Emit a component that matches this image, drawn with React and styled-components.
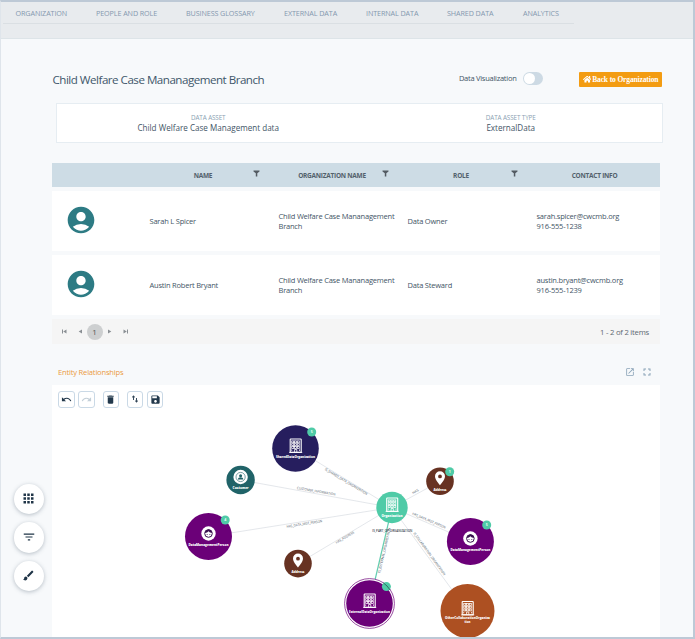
import styled, { createGlobalStyle } from "styled-components";
import {
  MdAccountCircle,
  MdApps,
  MdBrush,
  MdDelete,
  MdFilterList,
  MdFullscreen,
  MdOpenInNew,
  MdRedo,
  MdSave,
  MdUndo,
} from "react-icons/md";
import { FaHome } from "react-icons/fa";

const GlobalStyle = createGlobalStyle`
  * {
    box-sizing: border-box;
  }
  body {
    margin: 0;
    font-family: "Open Sans", "Noto Sans", sans-serif;
    color: #3f5566;
  }
`;

const Page = styled.div`
  height: 639px;
  overflow: hidden;
  background: #f7f9fb;
  border: 2px solid #bdc9d6;
  border-left: 1px solid #dfe5eb;
`;

const Header = styled.header`
  height: 37px;
  background: #e8ebee;
  border-bottom: 1px solid #dde4e8;
`;

const Nav = styled.nav`
  display: flex;
  align-items: center;
  width: 571px;
  height: 22px;
  margin-left: 2px;
  padding-left: 12.5px;
  border-bottom: 1px solid #dadfe3;
`;

const NavItem = styled.a`
  flex: none;
  width: ${(props) => props.$width}px;
  font-size: 7.2px;
  letter-spacing: -0.1px;
  white-space: nowrap;
  color: #8498af;
`;

const Body = styled.div`
  display: flex;
`;

const Gutter = styled.aside`
  display: flex;
  flex-direction: column;
  gap: 8px;
  width: 51px;
  padding: 444.5px 0 0 12.5px;
`;

const RoundButton = styled.button`
  display: flex;
  align-items: center;
  justify-content: center;
  width: 30.5px;
  height: 30.5px;
  padding: 0;
  border: none;
  border-radius: 50%;
  background: #fff;
  color: #1f3447;
  box-shadow: 0 1px 4px rgba(60, 80, 100, 0.35);
`;

const Content = styled.main`
  width: 611px;
`;

const TitleRow = styled.div`
  display: flex;
  align-items: center;
  height: 64px;
  padding-top: 16px;
`;

const Title = styled.h1`
  flex: 1;
  margin: 0 0 0 0.5px;
  font-size: 11.6px;
  font-weight: 400;
  letter-spacing: -0.5px;
  white-space: nowrap;
  color: #40576a;
`;

const ToggleLabel = styled.span`
  margin: -3px 6px 0 0;
  font-size: 7.5px;
  letter-spacing: -0.26px;
`;

const Toggle = styled.span`
  display: flex;
  align-items: center;
  width: 20.5px;
  height: 13.5px;
  margin: -1px 36px 0 0;
  padding: 1px;
  border-radius: 7px;
  background: #cddae4;

  &::before {
    content: "";
    width: 11.5px;
    height: 11.5px;
    border-radius: 50%;
    background: #fff;
  }
`;

const BackButton = styled.button`
  display: flex;
  align-items: center;
  justify-content: center;
  gap: 1px;
  width: 83px;
  height: 15px;
  margin-right: 1px;
  padding: 0;
  border: none;
  border-radius: 1px;
  background: #f39c12;
  color: #fff;
  font: bold 7.5px "Liberation Serif", serif;
  letter-spacing: -0.13px;
  white-space: nowrap;
`;

const AssetCard = styled.section`
  display: grid;
  grid-template-columns: 1fr 1fr;
  align-items: center;
  width: 607px;
  height: 40px;
  margin-left: 4px;
  padding-bottom: 1px;
  background: #fff;
  border: 1px solid #e6edf2;
  text-align: center;
`;

const AssetLabel = styled.div`
  font-size: 6.3px;
  line-height: 11px;
  letter-spacing: -0.1px;
  color: #8b9fb3;
`;

const AssetValue = styled.div`
  font-size: 8.1px;
  line-height: 10px;
`;

const Table = styled.section`
  width: 608px;
  margin-top: 20px;
`;

const HeadRow = styled.div`
  display: grid;
  grid-template-columns: 90px 129px 129px 129px 131px;
  align-items: center;
  height: 24px;
  background: #cddce5;
`;

const HeadCell = styled.div`
  display: flex;
  align-items: center;
  font-size: 6.5px;
  font-weight: 700;
  letter-spacing: -0.25px;
  color: #53616c;

  span {
    flex: 1;
    text-align: center;
  }
  svg {
    margin: -4px 11px 0 -11px;
  }
`;

const Row = styled.div`
  display: grid;
  grid-template-columns: 90px 129px 129px 129px 131px;
  align-items: center;
  height: 60px;
  margin-top: 4px;
  background: #fff;
`;

const Avatar = styled(MdAccountCircle)`
  margin: -3px 0 0 12.5px;
  color: #2d7b84;
`;

const Cell = styled.div`
  padding-left: 7.5px;
  font-size: 7.5px;
  line-height: 10px;
  letter-spacing: -0.21px;
  white-space: pre;
`;

const Pager = styled.div`
  display: flex;
  align-items: center;
  gap: 3px;
  height: 25px;
  margin-top: 4px;
  padding: 0 11px 0 8.5px;
  background: #f5f5f5;
  color: #8a8f94;
`;

const PagerArrows = styled.span`
  display: flex;
  gap: 9px;
`;

const PageNumber = styled.span`
  display: flex;
  align-items: center;
  justify-content: center;
  width: 16px;
  height: 16px;
  border-radius: 50%;
  background: #cdcfd0;
  color: #555;
  font-size: 8px;
`;

const PagerArrow = styled.svg`
  width: 7px;
  height: 7px;
  fill: currentColor;
`;

const PageCount = styled.span`
  margin-left: auto;
  font-size: 7.7px;
  letter-spacing: -0.23px;
  color: #5d6872;
`;

const PanelHead = styled.div`
  display: flex;
  align-items: center;
  gap: 6.5px;
  width: 608px;
  height: 41px;
  padding: 15px 7px 0 6px;
  color: #8aa3b8;
`;

const PanelTitle = styled.h2`
  flex: 1;
  margin: 0;
  padding-bottom: 1px;
  font-size: 7.6px;
  font-weight: 400;
  letter-spacing: -0.2px;
  color: #eb9a42;
`;

const Canvas = styled.section`
  width: 608px;
  height: 252px;
  background: #fff;
`;

const Toolbar = styled.div`
  display: flex;
  height: 22px;
  padding: 6px 0 0 6px;
`;

const ToolButton = styled.button`
  display: flex;
  align-items: center;
  justify-content: center;
  width: 16.5px;
  height: 16.5px;
  margin-right: ${(props) => props.$gap || 3.6}px;
  padding: 0;
  border: 1px solid #cad9e6;
  border-radius: 3px;
  background: #fff;
  color: ${(props) => (props.$faded ? "#c3cfd8" : "#22384b")};
`;

const Graph = styled.svg`
  display: block;
  font-family: "Open Sans", sans-serif;
`;

const navItems = [
  ["ORGANIZATION", 80.5],
  ["PEOPLE AND ROLE", 90],
  ["BUSINESS GLOSSARY", 98],
  ["EXTERNAL DATA", 82],
  ["INTERNAL DATA", 81],
  ["SHARED DATA", 76],
  ["ANALYTICS", 40],
];

const people = [
  {
    name: "Sarah L Spicer",
    role: "Data Owner",
    contact: "sarah.spicer@cwcmb.org\n916-555-1238",
  },
  {
    name: "Austin Robert Bryant",
    role: "Data Steward",
    contact: "austin.bryant@cwcmb.org\n916-555-1239",
  },
];

const nodes = [
  { x: 295.5, y: 448.5, r: 23.3, color: "#261e5e", icon: "building", label: "SharedDataOrganization", w: 39, dy: 9, badge: [311.7, 432, "5"] },
  { x: 240.6, y: 480, r: 14.2, color: "#206368", icon: "customer", label: "Customer", w: 16, dy: 9 },
  { x: 208.5, y: 536.5, r: 23.5, color: "#6b0078", icon: "face", label: "DataManagementPerson", w: 40, dy: 9.3, badge: [225.2, 520, "4"] },
  { x: 298, y: 563.6, r: 13.8, color: "#673222", icon: "pin", label: "Address", w: 13, dy: 9.5 },
  { x: 440, y: 481.3, r: 13.8, color: "#673222", icon: "pin", label: "Address", w: 13, dy: 9.5, badge: [449.7, 471.7, "1"] },
  { x: 470.4, y: 541.5, r: 23.5, color: "#6b0078", icon: "face", label: "DataManagementPerson", w: 40, dy: 9, badge: [486.7, 525, "5"] },
  { x: 369.5, y: 603.5, r: 23.3, color: "#6b0078", icon: "building", label: "ExternalDataOrganization", w: 41, dy: 9, ring: true, badge: [386.4, 586.6, ""] },
  { x: 467.5, y: 611, r: 27, color: "#ad5022", icon: "building", label: "OtherCollaborationOrganiza", w: 45, dy: 8, label2: "tion" },
  { x: 392, y: 507.5, r: 15.7, color: "#4fcba7", icon: "building", label: "Organization", w: 21, dy: 9.3 },
];

const edges = [
  { to: [295.5, 448.5], text: "IS_SHARED_DATA_ORGANIZATION", at: [345.5, 482.5], w: 49, angle: 31 },
  { to: [240.6, 480], text: "CUSTOMER_INFORMATION", at: [316, 492.3], w: 39, angle: 10 },
  { to: [208.5, 536.5], text: "HAS_DATA_MGT_PERSON", at: [304.5, 525], w: 36, angle: -9 },
  { to: [298, 563.6], text: "HAS_ADDRESS", at: [345.5, 538.5], w: 21, angle: -31 },
  { to: [440, 481.3], text: "HAS", at: [416, 492.5], w: 7, angle: -29 },
  { to: [470.4, 541.5], text: "HAS_DATA_MGT_PERSON", at: [428.5, 521.5], w: 36, angle: 23 },
  { to: [369.5, 603.5], text: "IS_EXTERNAL_ORGANIZATION", at: [385.5, 550.5], w: 46, angle: -77, active: true },
  { to: [467.5, 611], text: "IS_COLLABORATION_ORGANIZATION", at: [428.5, 554.5], w: 52, angle: 54 },
];

function FilterGlyph() {
  return (
    <svg width="7" height="7" viewBox="0 0 7 7">
      <path d="M.5 .5h6v1L4.3 3.2V6.5H2.8V3.2L.5 1.5z" fill="#535b62" />
    </svg>
  );
}

function NodeIcon({ type }) {
  if (type === "building") {
    return (
      <g>
        <rect x="-5.3" y="-9.5" width="11" height="13.2" rx=".5" fill="none" stroke="#fff" strokeWidth="1.1" />
        <path d="M-6.3 3.900h13" stroke="#fff" strokeWidth="1" />
        {[-7.6, -4.8, -2].map((y) =>
          [-3.8, -1, 1.8].map((x) => (
            <rect key={`${x},${y}`} x={x} y={y} width="2" height="1.9" fill="none" stroke="#fff" strokeWidth=".75" />
          ))
        )}
        <path d="M-.9 3.500V1h2.200v2.500M-3.800 .9v1.500M4 .9v1.500" fill="none" stroke="#fff" strokeWidth=".8" />
      </g>
    );
  }
  if (type === "pin") {
    return (
      <path
        fill="#fff"
        fillRule="evenodd"
        d="M0 -10a5 5 0 0 0-5 5c0 3.500 5 9 5 9s5-5.500 5-9a5 5 0 0 0-5-5zm0 3.200a1.900 1.900 0 1 1 0 3.800 1.900 1.900 0 0 1 0-3.800z"
      />
    );
  }
  if (type === "face") {
    return (
      <g transform="translate(0 -3)">
        <circle r="7.2" fill="#fff" />
        <circle r="3.800" fill="none" stroke="#38104f" strokeWidth="1" />
        <path d="M-3.800 -.5Q-1 -.7 0 -2.300Q1.500 -.4 3.800 -.7L2.500 -3.200L0 -4.200L-2.700 -3z" fill="#38104f" />
        <circle cx="-1.400" cy=".9" r=".5" fill="#38104f" />
        <circle cx="1.400" cy=".9" r=".5" fill="#38104f" />
      </g>
    );
  }
  return (
    <g transform="translate(0 -3)">
      <circle r="7.2" fill="#fff" />
      <circle r="4.600" fill="none" stroke="#206368" strokeWidth=".6" />
      <circle cy="-1.200" r="1.500" fill="#206368" />
      <path d="M-2.700 2.400c0-3 5.400-3 5.400 0z" fill="#206368" />
    </g>
  );
}

function RelationshipGraph() {
  return (
    <Graph width="608" height="230" viewBox="52 407 608 230">
      {edges.map(({ to, text, at, w, angle, active }) => (
        <g key={to.join()}>
          <line
            x1="392"
            y1="507.5"
            x2={to[0]}
            y2={to[1]}
            stroke={active ? "#62cdb2" : "#d9dde2"}
            strokeWidth={active ? 1.2 : 0.7}
          />
          <text
            transform={`translate(${at[0]} ${at[1]}) rotate(${angle})`}
            textAnchor="middle"
            fontSize="3.4"
            textLength={w}
            lengthAdjust="spacingAndGlyphs"
            fill="#4d5966"
          >
            {text}
          </text>
        </g>
      ))}
      <text x="392.3" y="531.7" textAnchor="middle" fontSize="3.9" fontWeight="600" textLength="40" lengthAdjust="spacingAndGlyphs" fill="#35404b">
        IS_PART_OF_ORGANIZATION
      </text>
      {nodes.map((node) => (
        <g key={`${node.x}-${node.y}`}>
          {node.ring && <circle cx={node.x} cy={node.y} r="24.9" fill="#fff" stroke="#6b0078" strokeWidth=".7" />}
          <circle cx={node.x} cy={node.y} r={node.r} fill={node.color} />
          <g transform={`translate(${node.x} ${node.y})`}>
            <NodeIcon type={node.icon} />
            <text y={node.dy} textAnchor="middle" fontSize="3.6" fontWeight="800" textLength={node.w} lengthAdjust="spacingAndGlyphs" fill="#fff">
              {node.label}
            </text>
            {node.label2 && (
              <text y={node.dy + 4.2} textAnchor="middle" fontSize="3.6" fontWeight="800" textLength="6" lengthAdjust="spacingAndGlyphs" fill="#fff">
                {node.label2}
              </text>
            )}
          </g>
          {node.badge && (
            <g>
              <circle cx={node.badge[0]} cy={node.badge[1]} r="4.5" fill="#4fcba7" />
              <text x={node.badge[0]} y={node.badge[1] + 1.3} textAnchor="middle" fontSize="3.6" fontWeight="700" fill="#e8fff8">
                {node.badge[2]}
              </text>
            </g>
          )}
        </g>
      ))}
      {/* the selection ring runs over its own badge */}
      <path d="M383.300 582.800A24.900 24.900 0 0 1 390.100 590" fill="none" stroke="#28534f" strokeWidth=".8" />
    </Graph>
  );
}

function App() {
  return (
    <Page>
      <GlobalStyle />
      <Header>
        <Nav>
          {navItems.map(([label, width]) => (
            <NavItem key={label} $width={width}>
              {label}
            </NavItem>
          ))}
        </Nav>
      </Header>
      <Body>
        <Gutter>
          <RoundButton>
            <MdApps size={15} />
          </RoundButton>
          <RoundButton>
            <MdFilterList size={14} />
          </RoundButton>
          <RoundButton>
            <MdBrush size={13} />
          </RoundButton>
        </Gutter>
        <Content>
          <TitleRow>
            <Title>Child Welfare Case Mananagement Branch</Title>
            <ToggleLabel>Data Visualization</ToggleLabel>
            <Toggle />
            <BackButton>
              <FaHome size={8.5} />
              Back to Organization
            </BackButton>
          </TitleRow>
          <AssetCard>
            <div>
              <AssetLabel>DATA ASSET</AssetLabel>
              <AssetValue>Child Welfare Case Management data</AssetValue>
            </div>
            <div>
              <AssetLabel>DATA ASSET TYPE</AssetLabel>
              <AssetValue>ExternalData</AssetValue>
            </div>
          </AssetCard>
          <Table>
            <HeadRow>
              <HeadCell />
              {["NAME", "ORGANIZATION NAME", "ROLE"].map((label) => (
                <HeadCell key={label}>
                  <span>{label}</span>
                  <FilterGlyph />
                </HeadCell>
              ))}
              <HeadCell>
                <span>CONTACT INFO</span>
              </HeadCell>
            </HeadRow>
            {people.map((person) => (
              <Row key={person.name}>
                <Avatar size={32} />
                <Cell>{person.name}</Cell>
                <Cell>{"Child Welfare Case Mananagement\nBranch"}</Cell>
                <Cell>{person.role}</Cell>
                <Cell>{person.contact}</Cell>
              </Row>
            ))}
            <Pager>
              <PagerArrows>
                <PagerArrow viewBox="0 0 7 7">
                  <path d="M1 1.500h1v4H1zM5.500 1.500v4L2.200 3.500z" />
                </PagerArrow>
                <PagerArrow viewBox="0 0 7 7">
                  <path d="M5 1.500v4L1.700 3.500z" />
                </PagerArrow>
              </PagerArrows>
              <PageNumber>1</PageNumber>
              <PagerArrows>
                <PagerArrow viewBox="0 0 7 7">
                  <path d="M2 1.500v4L5.300 3.500z" />
                </PagerArrow>
                <PagerArrow viewBox="0 0 7 7">
                  <path d="M5 1.500h1v4H5zM1.500 1.500v4L4.800 3.500z" />
                </PagerArrow>
              </PagerArrows>
              <PageCount>1 - 2 of 2 items</PageCount>
            </Pager>
          </Table>
          <PanelHead>
            <PanelTitle>Entity Relationships</PanelTitle>
            <MdOpenInNew size={10} />
            <MdFullscreen size={12} />
          </PanelHead>
          <Canvas>
            <Toolbar>
              <ToolButton>
                <MdUndo size={11} />
              </ToolButton>
              <ToolButton $faded $gap={8}>
                <MdRedo size={11} />
              </ToolButton>
              <ToolButton $gap={7.8}>
                <MdDelete size={11} />
              </ToolButton>
              <ToolButton>
                <svg width="8" height="8" viewBox="0 0 8 8" fill="none" stroke="currentColor" strokeWidth=".9">
                  <path d="M2.500 5V1M1 2.400L2.500 1L4 2.400M5.500 3v4M4 5.600L5.500 7L7 5.600" />
                </svg>
              </ToolButton>
              <ToolButton>
                <MdSave size={11} />
              </ToolButton>
            </Toolbar>
            <RelationshipGraph />
          </Canvas>
        </Content>
      </Body>
    </Page>
  );
}

export default App;
